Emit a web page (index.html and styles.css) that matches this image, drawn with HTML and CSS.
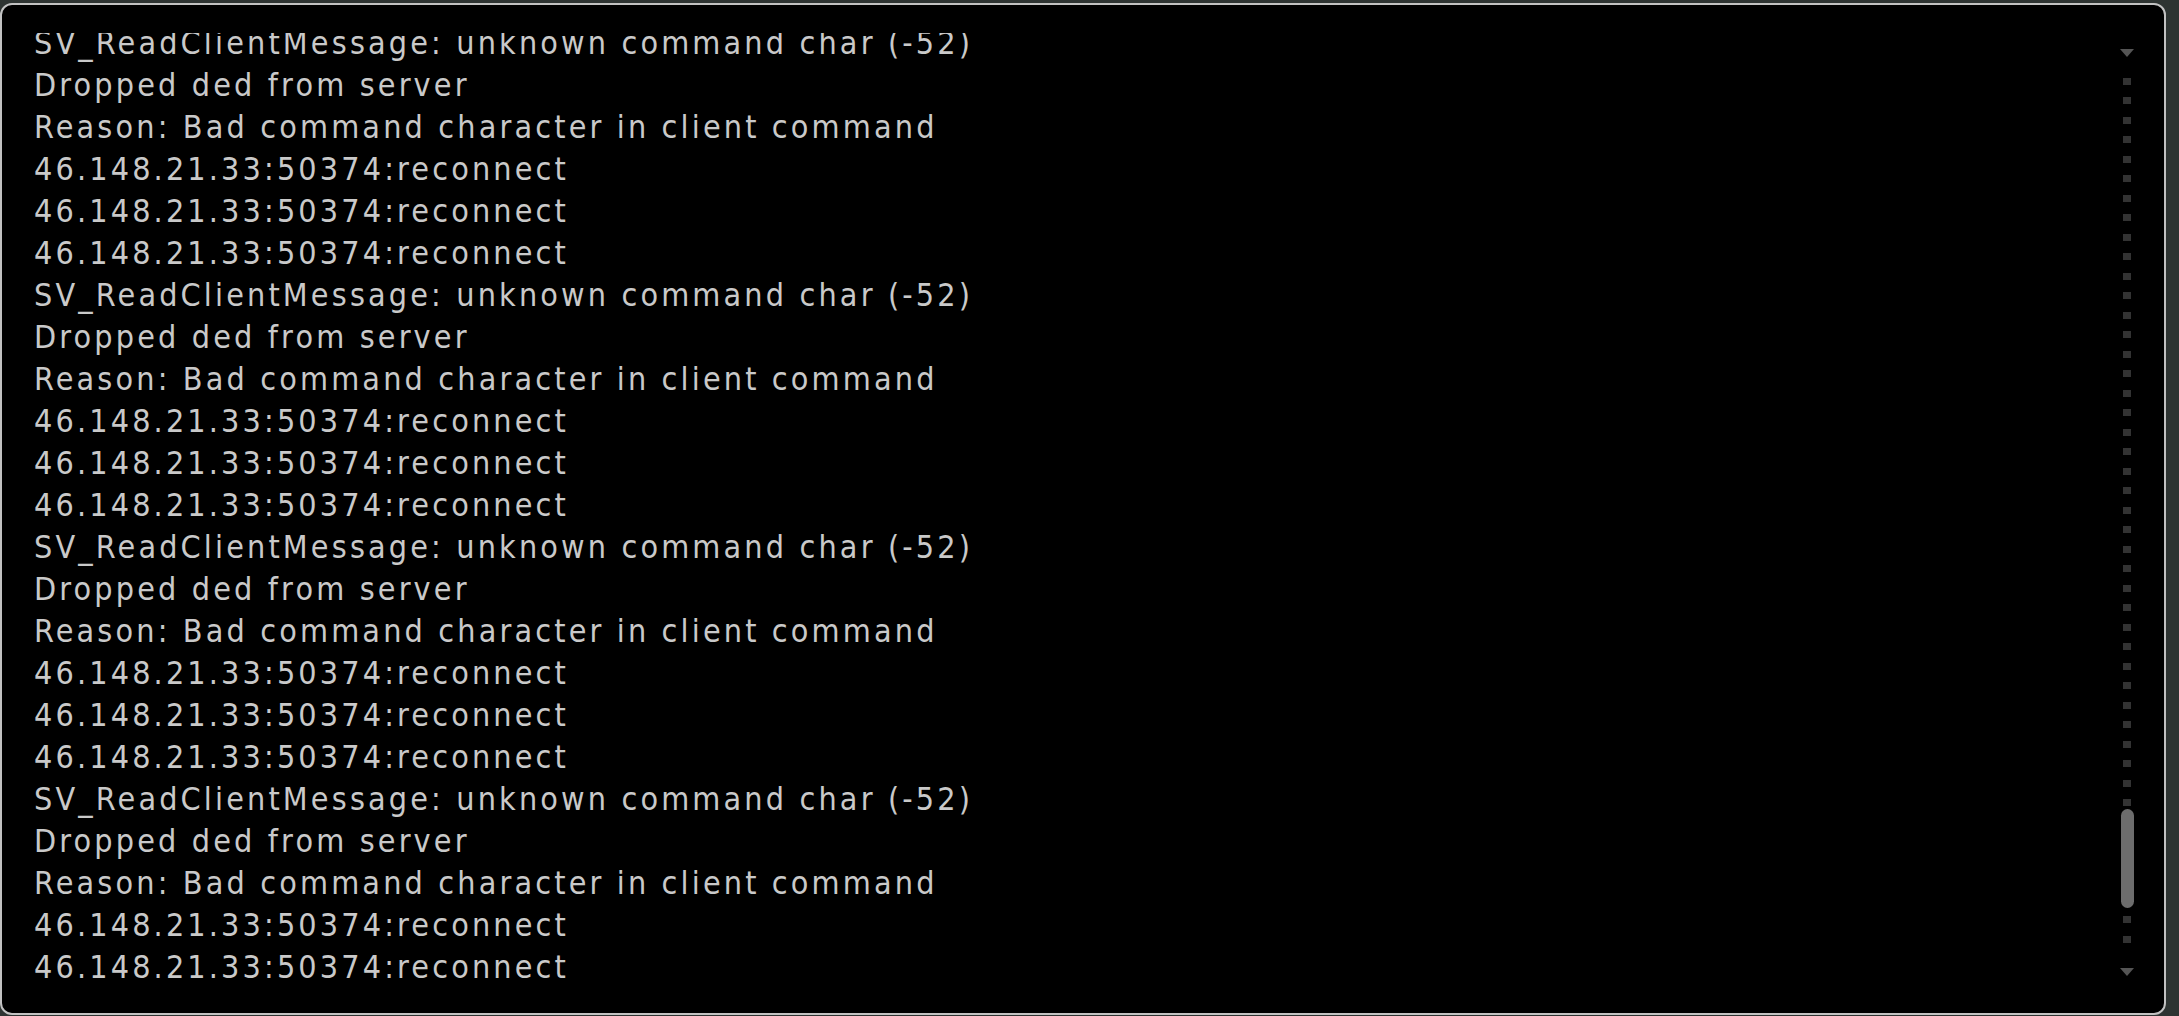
FILE: index.html
```html
<!DOCTYPE html>
<html><head><meta charset="utf-8"><link rel="stylesheet" href="styles.css"></head>
<body>
<div class="panel">
  <div class="log">
    <div class="lines">
      <div class="line">SV_ReadClientMessage: unknown command char (-52)</div>
      <div class="line">Dropped ded from server</div>
      <div class="line">Reason: Bad command character in client command</div>
      <div class="line">46.148.21.33:50374:reconnect</div>
      <div class="line">46.148.21.33:50374:reconnect</div>
      <div class="line">46.148.21.33:50374:reconnect</div>
      <div class="line">SV_ReadClientMessage: unknown command char (-52)</div>
      <div class="line">Dropped ded from server</div>
      <div class="line">Reason: Bad command character in client command</div>
      <div class="line">46.148.21.33:50374:reconnect</div>
      <div class="line">46.148.21.33:50374:reconnect</div>
      <div class="line">46.148.21.33:50374:reconnect</div>
      <div class="line">SV_ReadClientMessage: unknown command char (-52)</div>
      <div class="line">Dropped ded from server</div>
      <div class="line">Reason: Bad command character in client command</div>
      <div class="line">46.148.21.33:50374:reconnect</div>
      <div class="line">46.148.21.33:50374:reconnect</div>
      <div class="line">46.148.21.33:50374:reconnect</div>
      <div class="line">SV_ReadClientMessage: unknown command char (-52)</div>
      <div class="line">Dropped ded from server</div>
      <div class="line">Reason: Bad command character in client command</div>
      <div class="line">46.148.21.33:50374:reconnect</div>
      <div class="line">46.148.21.33:50374:reconnect</div>
    </div>
  </div>
  <div class="scrollbar">
    <div class="arrow"></div>
    <div class="track"><div class="thumb"></div></div>
    <div class="arrow"></div>
  </div>
</div>
</body></html>
```
FILE: styles.css
```css
html,body{margin:0;height:100%}
body{background:#2e3432;padding:3px 13px 1px 0;box-sizing:border-box;overflow:hidden}
.panel{height:1012px;box-sizing:border-box;background:#000;border:2px solid #c2c2c2;border-radius:12px;display:flex;overflow:hidden}
.log{flex:1;margin-top:28px;padding-left:32px;overflow:hidden;min-width:0}
.lines{margin-top:-10.9px}
.line{font-family:"DejaVu Sans Condensed","DejaVu Sans",sans-serif;font-stretch:condensed;font-size:32px;line-height:42px;letter-spacing:3.15px;color:#c9c9c9;white-space:nowrap}
.scrollbar{width:14px;margin-right:30px;padding:44px 0 37px;display:flex;flex-direction:column;align-items:center}
.arrow{width:0;height:0;border-left:7px solid transparent;border-right:7px solid transparent;border-top:8px solid #555}
.track{flex:1;width:13px;margin:21px 0 22px;position:relative;background-image:repeating-linear-gradient(to bottom,#333 0 7px,transparent 7px 19.5px);background-size:8px 100%;background-position:center top;background-repeat:no-repeat}
.thumb{position:absolute;left:0;right:0;top:731px;height:99px;border-radius:7px;background:#6d6d6d}
```
